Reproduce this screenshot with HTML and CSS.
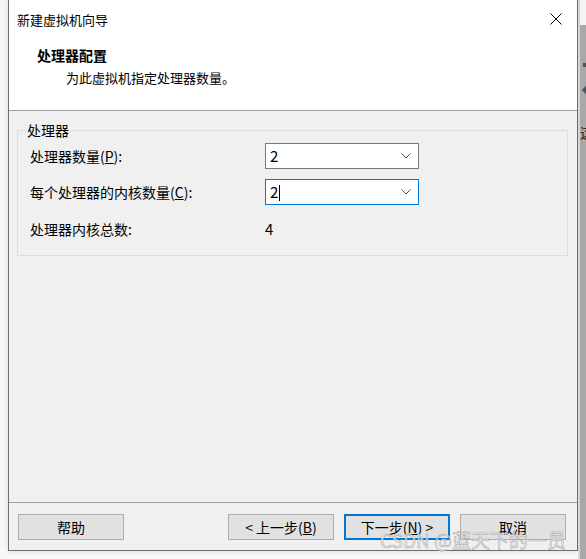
FILE: index.html
```html
<!DOCTYPE html>
<html>
<head>
  <meta charset="utf-8">
  <title>新建虚拟机向导</title>
  <link rel="stylesheet" href="styles.css">
</head>
<body>
  <div class="desk">
    <div class="dialog">
      <div class="top">
        <div class="titlebar">
          <span>新建虚拟机向导</span>
          <svg class="close" width="12" height="12" viewBox="0 0 12 12"><path d="M0.5 0.5 L11.5 11.5 M11.5 0.5 L0.5 11.5" stroke="#000" stroke-width="1" fill="none"/></svg>
        </div>
        <div class="head-title">处理器配置</div>
        <div class="head-sub">为此虚拟机指定处理器数量。</div>
      </div>

      <div class="content">
        <fieldset class="group">
          <legend>处理器</legend>
          <div class="rows">
            <label>处理器数量(<u>P</u>):</label>
            <div class="combo">
              <span class="val">2</span>
              <svg width="10" height="6" viewBox="0 0 10 6"><polyline points="0.5,0.5 5,5 9.5,0.5" stroke="#555" fill="none"/></svg>
            </div>
            <label>每个处理器的内核数量(<u>C</u>):</label>
            <div class="combo focus">
              <span class="val">2<i class="caret"></i></span>
              <svg width="10" height="6" viewBox="0 0 10 6"><polyline points="0.5,0.5 5,5 9.5,0.5" stroke="#555" fill="none"/></svg>
            </div>
            <label class="total">处理器内核总数:</label>
            <span class="val total">4</span>
          </div>
        </fieldset>
      </div>

      <div class="footer">
        <button class="btn help">帮助</button>
        <button class="btn">&lt; 上一步(<u>B</u>)</button>
        <button class="btn primary">下一步(<u>N</u>) &gt;</button>
        <button class="btn">取消</button>
      </div>
    </div>
    <div class="behind">
      <div class="behind-top"></div>
      <div class="mark sq"></div>
      <div class="mark dia"></div>
      <div class="behind-char">这</div>
    </div>
    <div class="watermark">CSDN @蓝天下的一员</div>
  </div>
</body>
</html>
```

FILE: styles.css
```css
body {
  margin: 0;
  background-color: #f7f7f7;
  color: #000;
  font-family: "Noto Sans CJK SC", sans-serif;
}

.desk {
  position: relative;
  display: flex;
  height: 559px;
  padding-left: 8px;
  box-sizing: border-box;
  overflow: hidden;
}

.dialog {
  width: 570px;
  height: 551px;
  box-sizing: border-box;
  border: 1px solid #6e6e6e;
  border-top: none;
  background-color: #f0f0f0;
  display: flex;
  flex-direction: column;
  box-shadow: 0 0 6px rgba(0, 0, 0, 0.12);
}

.top {
  height: 110px;
  background-color: #fff;
  border-bottom: 1px solid #a0a0a0;
}

.titlebar {
  display: flex;
  justify-content: space-between;
  align-items: center;
  height: 38px;
  padding: 0 15px 0 8px;
  font-size: 13px;
}

.head-title {
  margin-top: 7px;
  padding-left: 28px;
  font-size: 14px;
  font-weight: bold;
  line-height: 20px;
}

.head-sub {
  margin-top: 3px;
  padding-left: 57px;
  font-size: 13px;
  line-height: 20px;
}

.content {
  flex: 1;
  padding: 9px 9px 0 8px;
}

.group {
  margin: 0;
  border: 1px solid #dcdcdc;
  padding: 3px 12px 14px 12px;
}

.group legend {
  margin-left: -5px;
  padding: 0 2px;
  font-size: 14px;
  line-height: 20px;
}

.rows {
  display: grid;
  grid-template-columns: 235px 154px;
  grid-auto-rows: 26px;
  row-gap: 10px;
  align-items: center;
  font-size: 14px;
}

.rows .total {
  margin-top: 2px;
}

.combo {
  height: 26px;
  box-sizing: border-box;
  border: 1px solid #7a7a7a;
  background-color: #fff;
  display: flex;
  align-items: center;
  justify-content: space-between;
  padding: 0 7px 0 4px;
}

.combo.focus {
  border-color: #0078d7;
}

.val {
  font-size: 15px;
  line-height: 20px;
}

.caret {
  display: inline-block;
  width: 1px;
  height: 16px;
  background-color: #000;
  vertical-align: -3px;
  margin-left: 1px;
}

.footer {
  display: flex;
  gap: 10px;
  border-top: 1px solid #a0a0a0;
  padding: 11px 11px 10px 9px;
}

.btn {
  width: 106px;
  height: 26px;
  box-sizing: border-box;
  background-color: #e1e1e1;
  border: 1px solid #adadad;
  font-family: "Noto Sans CJK SC", sans-serif;
  font-size: 14px;
  color: #000;
  padding: 0;
}

.btn.help {
  margin-right: auto;
}

.btn.primary {
  border: 2px solid #0078d7;
}

.behind {
  position: relative;
  flex: 1;
  background-color: #a8a8a8;
  border-left: 2px solid #d6d6d6;
}

.behind-top {
  height: 25px;
  background-color: #f4f4f4;
}

.mark {
  position: absolute;
  left: 3px;
  background-color: #4a5560;
}

.mark.sq {
  top: 63px;
  width: 5px;
  height: 4px;
}

.mark.dia {
  top: 87px;
  width: 6px;
  height: 6px;
  transform: rotate(45deg);
}

.behind-char {
  position: absolute;
  top: 122px;
  left: 0;
  font-size: 14px;
  color: #222;
}

.watermark {
  position: absolute;
  left: 380px;
  top: 526px;
  font-size: 19px;
  color: rgba(235, 235, 235, 0.85);
  -webkit-text-stroke: 0.5px rgba(130, 130, 130, 0.7);
  white-space: nowrap;
}
```
